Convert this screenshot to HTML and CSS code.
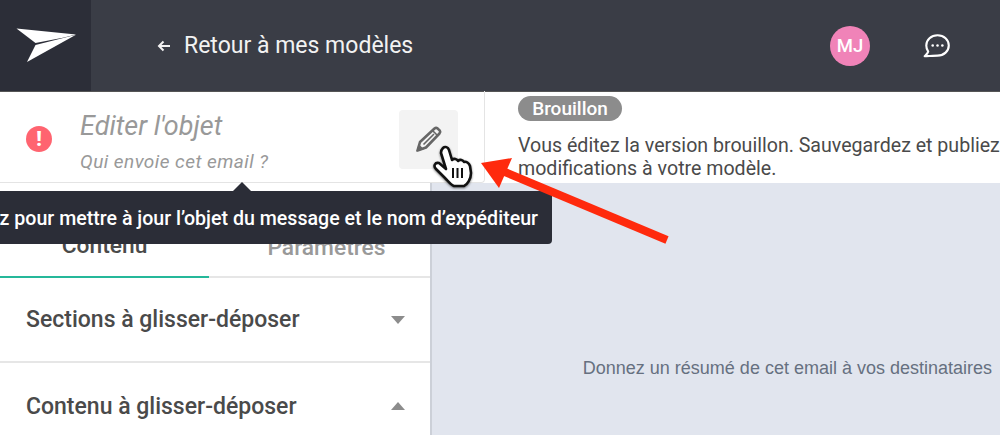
FILE: index.html
```html
<!DOCTYPE html>
<html lang="fr">
<head>
    <meta charset="UTF-8">
    <meta name="viewport" content="width=device-width, initial-scale=1.0">
    <title>Editeur de modèle</title>
    <link rel="stylesheet" href="styles.css">
</head>
<body>
    <div class="page">
        <header class="topbar">
            <div class="logo">
                <svg width="60" height="36" viewBox="0 0 60 36">
                    <path d="M0.500 0.500 L60 6.500 L48 9.500 L19.500 15 Z" fill="#fff"/>
                    <path d="M60.500 6.500 L11 34 L19.500 17 Z" fill="#fff"/>
                </svg>
            </div>
            <a class="back-link">
                <svg class="back-arrow" width="14" height="12" viewBox="0 0 14 12" fill="none">
                    <path d="M13 6 H2 M6.500 1.500 L2 6 L6.500 10.500" stroke="#f2f2f2" stroke-width="2"/>
                </svg>
                Retour à mes modèles
            </a>
            <div class="avatar">MJ</div>
            <div class="chat">
                <svg width="30" height="28" viewBox="0 0 28 26" fill="none">
                    <path d="M14.500 3 C20.500 3 25 7.300 25 12.500 C25 17.700 20.500 22 14.500 22 C12 22 4 22.500 2.500 22.500 C3.500 21.500 5.500 19.800 5.800 18.200 C4.600 16.600 4 14.600 4 12.500 C4 7.300 8.500 3 14.500 3 Z" stroke="#fff" stroke-width="2" stroke-linejoin="round"/>
                    <circle cx="10" cy="12.500" r="1.200" fill="#fff"/>
                    <circle cx="14.500" cy="12.500" r="1.200" fill="#fff"/>
                    <circle cx="19" cy="12.500" r="1.200" fill="#fff"/>
                </svg>
            </div>
        </header>

        <div class="subhead">
            <div class="object-panel">
                <div class="alert-icon">!</div>
                <div class="object-text">
                    <div class="object-title">Editer l'objet</div>
                    <div class="object-sender">Qui envoie cet email ?</div>
                </div>
                <button class="edit-btn">
                    <svg width="28" height="28" viewBox="0 0 28 28" fill="none">
                        <path d="M2.500 25.500 L5 17 L19.500 3.500 Q21 2.300 22.500 3.300 L24.800 5.600 Q25.800 7 24.500 8.500 L11 22.500 Z" stroke="#666" stroke-width="2.600" stroke-linejoin="round"/>
                        <path d="M8.500 19.500 L19 9 M17.500 5.500 L22.500 10.500" stroke="#666" stroke-width="1.600"/>
                        <path d="M2.500 25.500 L4 20.500 L7.500 24 Z" stroke="#666" stroke-width="1.500" fill="#666"/>
                    </svg>
                </button>
            </div>
            <div class="draft-panel">
                <span class="draft-badge">Brouillon</span>
                <p class="draft-text">Vous éditez la version brouillon. Sauvegardez et publiez vos<br>modifications à votre modèle.</p>
            </div>
        </div>

        <div class="workspace">
            <aside class="sidebar">
                <div class="tabs">
                    <div class="tab tab-active">Contenu</div>
                    <div class="tab tab-other">Paramètres</div>
                </div>
                <div class="section">
                    <span>Sections à glisser-déposer</span>
                    <span class="caret-down"></span>
                </div>
                <div class="section">
                    <span>Contenu à glisser-déposer</span>
                    <span class="caret-up"></span>
                </div>
            </aside>
            <main class="canvas">
                <p class="preheader">Donnez un résumé de cet email à vos destinataires</p>
            </main>
        </div>

        <div class="tooltip">Cliquez pour mettre à jour l’objet du message et le nom d’expéditeur</div>

        <svg class="annotation" width="240" height="120" viewBox="0 0 240 120">
            <path d="M207 100 L40 30" stroke="#ff2a0d" stroke-width="8" fill="none"/>
            <path d="M21 23 L52 18 L39 48 Z" fill="#ff2a0d"/>
        </svg>

        <svg class="cursor" width="42" height="44" viewBox="0 0 42 44">
            <path d="M10 3 C12 1 15 2 16 5 L19 15 C21 13 24 14 25 16 C27 14 30 15 31 17 C33 16 36 18 37 21 L38 28 C38 34 34 40 31 41 L21 41 C18 40 15 36 12 33 L3 24 C0 21 2 17 6 18 L13 24 L8 8 C8 5 9 4 10 3 Z" fill="#fff" stroke="#111" stroke-width="2.600" stroke-linejoin="round"/>
            <path d="M20 23 V33 M24.500 23 V33 M29 23 V33" stroke="#111" stroke-width="2"/>
        </svg>
    </div>
</body>
</html>
```

FILE: styles.css
```css
* {
    box-sizing: border-box;
}
html, body {
    margin: 0;
    padding: 0;
}
body {
    font-family: Roboto, sans-serif;
    color: #4a4a4a;
    background-color: #fff;
}
.page {
    position: relative;
    width: 1000px;
    height: 435px;
    overflow: hidden;
}
.topbar {
    display: flex;
    align-items: center;
    height: 91px;
    background-color: #3a3d46;
    color: #fff;
}
.logo {
    display: flex;
    align-items: center;
    justify-content: center;
    width: 91px;
    height: 91px;
    padding-top: 1px;
    background-color: #2c2e38;
}
.back-link {
    display: flex;
    align-items: center;
    margin-left: 66px;
    font-size: 23px;
    color: #f2f2f2;
}
.back-arrow {
    margin-right: 13px;
}
.avatar {
    display: flex;
    align-items: center;
    justify-content: center;
    width: 40px;
    height: 40px;
    margin-left: auto;
    border-radius: 50%;
    background-color: #f083b8;
    font-size: 18.500px;
    font-weight: 500;
}
.chat {
    display: flex;
    margin: 0 48px 0 52px;
}
.subhead {
    display: flex;
    height: 92px;
    box-shadow: inset 0 1px 0 #555;
}
.object-panel {
    display: flex;
    align-items: center;
    width: 485px;
    padding: 5px 26px 0;
    border-right: 1px solid #e4e4e4;
    border-bottom: 1px solid #e4e4e4;
    border-bottom-right-radius: 4px;
}
.alert-icon {
    width: 26px;
    height: 26px;
    border-radius: 50%;
    background-color: #ff6470;
    color: #fff;
    font-size: 20px;
    font-weight: 900;
    line-height: 26px;
    text-align: center;
}
.object-text {
    flex: 1;
    margin-left: 28px;
    padding-top: 3px;
    font-style: italic;
    color: #999;
}
.object-title {
    font-size: 27px;
    line-height: 32px;
}
.object-sender {
    margin-top: 10px;
    font-size: 19px;
    letter-spacing: 0.450px;
    line-height: 20px;
}
.edit-btn {
    display: flex;
    align-items: center;
    justify-content: center;
    width: 59px;
    height: 59px;
    padding: 0;
    border: none;
    border-radius: 4px;
    background-color: #f3f3f3;
}
.draft-panel {
    flex: 1;
    padding: 5px 0 0 33px;
    overflow: hidden;
}
.draft-badge {
    display: block;
    width: 104px;
    height: 25px;
    border-radius: 13px;
    background-color: #8c8c8c;
    color: #fff;
    font-size: 19px;
    font-weight: 500;
    line-height: 25px;
    text-align: center;
}
.draft-text {
    width: 560px;
    margin: 13px 0 0;
    font-size: 19.600px;
    line-height: 23px;
}
.workspace {
    display: flex;
    height: 252px;
}
.sidebar {
    width: 432px;
    border-right: 2px solid #ccd0d8;
}
.tabs {
    display: flex;
    height: 95px;
    border-bottom: 2px solid #e6e6e6;
}
.tab {
    display: flex;
    align-items: flex-end;
    justify-content: center;
    padding-bottom: 17px;
    margin-bottom: -2px;
    font-size: 22.800px;
    font-weight: 500;
    color: #999;
}
.tab-active {
    width: 209px;
    border-bottom: 2px solid #25b89a;
    color: #4a4a4a;
}
.tab-other {
    flex: 1;
    padding-left: 14px;
}
.section {
    display: flex;
    align-items: center;
    justify-content: space-between;
    height: 85px;
    padding: 0 25px 0 26px;
    border-bottom: 2px solid #e6e6e6;
    font-size: 23px;
    font-weight: 500;
    color: #4a4a4a;
}
.section + .section {
    height: 88px;
}
.caret-down, .caret-up {
    width: 0;
    height: 0;
    border-left: 7px solid transparent;
    border-right: 7px solid transparent;
}
.caret-down {
    border-top: 8px solid #8c8c8c;
}
.caret-up {
    border-bottom: 8px solid #8c8c8c;
}
.canvas {
    flex: 1;
    padding: 176px 8px 0 0;
    background-color: #e1e5ee;
    text-align: right;
}
.preheader {
    margin: 0;
    font-family: "Liberation Sans", Arial, sans-serif;
    font-size: 18px;
    line-height: 18px;
    color: #667080;
}
/* overlays */
.tooltip {
    position: absolute;
    top: 191px;
    right: 448px;
    height: 53px;
    padding: 0 14px;
    border-radius: 4px;
    background-color: #2b2d37;
    color: #fff;
    font-size: 19.600px;
    font-weight: 500;
    line-height: 55px;
    white-space: nowrap;
}
.tooltip::before {
    content: "";
    position: absolute;
    top: -9px;
    right: 301px;
    border-left: 9px solid transparent;
    border-right: 9px solid transparent;
    border-bottom: 9px solid #2b2d37;
}
.annotation {
    position: absolute;
    top: 140px;
    left: 460px;
}
.cursor {
    position: absolute;
    top: 145px;
    left: 433px;
    filter: drop-shadow(0 1px 1px rgba(0, 0, 0, 0.5));
}
```
